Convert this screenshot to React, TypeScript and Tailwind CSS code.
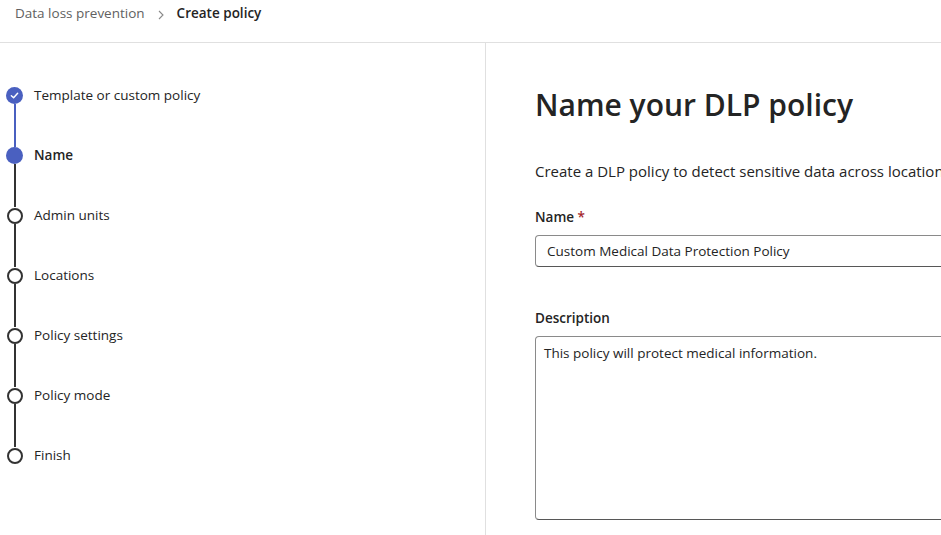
import React from 'react';

const steps = [
  { label: 'Template or custom policy', state: 'done' },
  { label: 'Name', state: 'current' },
  { label: 'Admin units', state: 'todo' },
  { label: 'Locations', state: 'todo' },
  { label: 'Policy settings', state: 'todo' },
  { label: 'Policy mode', state: 'todo' },
  { label: 'Finish', state: 'todo' },
];

function StepDot({ state }: { state: string }) {
  if (state === 'done') {
    return (
      <div className="w-[17px] h-[17px] rounded-full bg-[#4a60c0] flex items-center justify-center">
        <svg width="9" height="9" viewBox="0 0 10 10" fill="none">
          <path d="M1.5 5.2 L4 7.5 L8.5 2.5" stroke="white" strokeWidth="1.6" strokeLinecap="round" strokeLinejoin="round" />
        </svg>
      </div>
    );
  }
  if (state === 'current') {
    return <div className="w-[17px] h-[17px] rounded-full bg-[#4a60c0]" />;
  }
  return (
    <div className="w-[17px] h-[17px] flex items-center justify-center">
      <div className="w-[16px] h-[16px] rounded-full border-2 border-[#333333] bg-white" />
    </div>
  );
}

export default function App() {
  return (
    <div className="w-[941px] h-[535px] bg-white overflow-hidden flex flex-col text-[#242424]" style={{ fontFamily: '"Open Sans", "Noto Sans", sans-serif' }}>
      {/* Breadcrumb */}
      <header className="h-[43px] shrink-0 border-b border-[#e0e0e0] flex items-start pt-[3px] pl-[15px] text-[13.5px]">
        <span className="text-[#616161]">Data loss prevention</span>
        <svg className="mx-[12px] mt-[7px]" width="8" height="10" viewBox="0 0 8 10" fill="none">
          <path d="M2 1 L6 5 L2 9" stroke="#8a8a8a" strokeWidth="1.1" />
        </svg>
        <span className="font-semibold text-[#242424]">Create policy</span>
      </header>

      <div className="flex flex-1 min-h-0">
        {/* Steps */}
        <aside className="w-[486px] shrink-0 border-r border-[#e0e0e0] pt-[44px] pl-[6px]">
          {steps.map((s, i) => (
            <div key={s.label} className="flex">
              <div className="w-[17px] flex flex-col items-center">
                <StepDot state={s.state} />
                {i < steps.length - 1 && (
                  <div className={`w-[2px] h-[43px] ${i === 0 ? 'bg-[#4a60c0]' : 'bg-[#333333]'}`} />
                )}
              </div>
              <span className={`ml-[11px] text-[13.5px] leading-[17px] ${s.state === 'current' ? 'font-semibold' : ''} text-[#242424]`}>
                {s.label}
              </span>
            </div>
          ))}
        </aside>

        {/* Form */}
        <main className="flex-1 min-w-0 overflow-hidden pl-[49px] pt-[42px]">
          <div className="w-[700px]">
            <h1 className="text-[30px] leading-[40px] font-semibold text-[#242424]">Name your DLP policy</h1>
            <p className="mt-[35px] text-[15px] leading-[22px] text-[#242424] whitespace-nowrap">
              Create a DLP policy to detect sensitive data across locations and apply protection actions when the policy's conditions are met.
            </p>
            <label className="block mt-[25px] text-[13.5px] leading-[20px] font-semibold">
              Name <span className="text-[#a4262c]">*</span>
            </label>
            <div className="mt-[8px] h-[32px] rounded-[4px] border border-[#8a8a8a] border-b-[#575757] flex items-center pl-[11px] text-[13.5px]">
              Custom Medical Data Protection Policy
            </div>
            <label className="block mt-[41px] text-[13.5px] leading-[20px] font-semibold">Description</label>
            <div className="mt-[8px] h-[184px] rounded-[4px] border border-[#8a8a8a] border-b-[#575757] pl-[8px] pt-[6px] text-[13.5px]">
              This policy will protect medical information.
            </div>
          </div>
        </main>
      </div>
    </div>
  );
}
